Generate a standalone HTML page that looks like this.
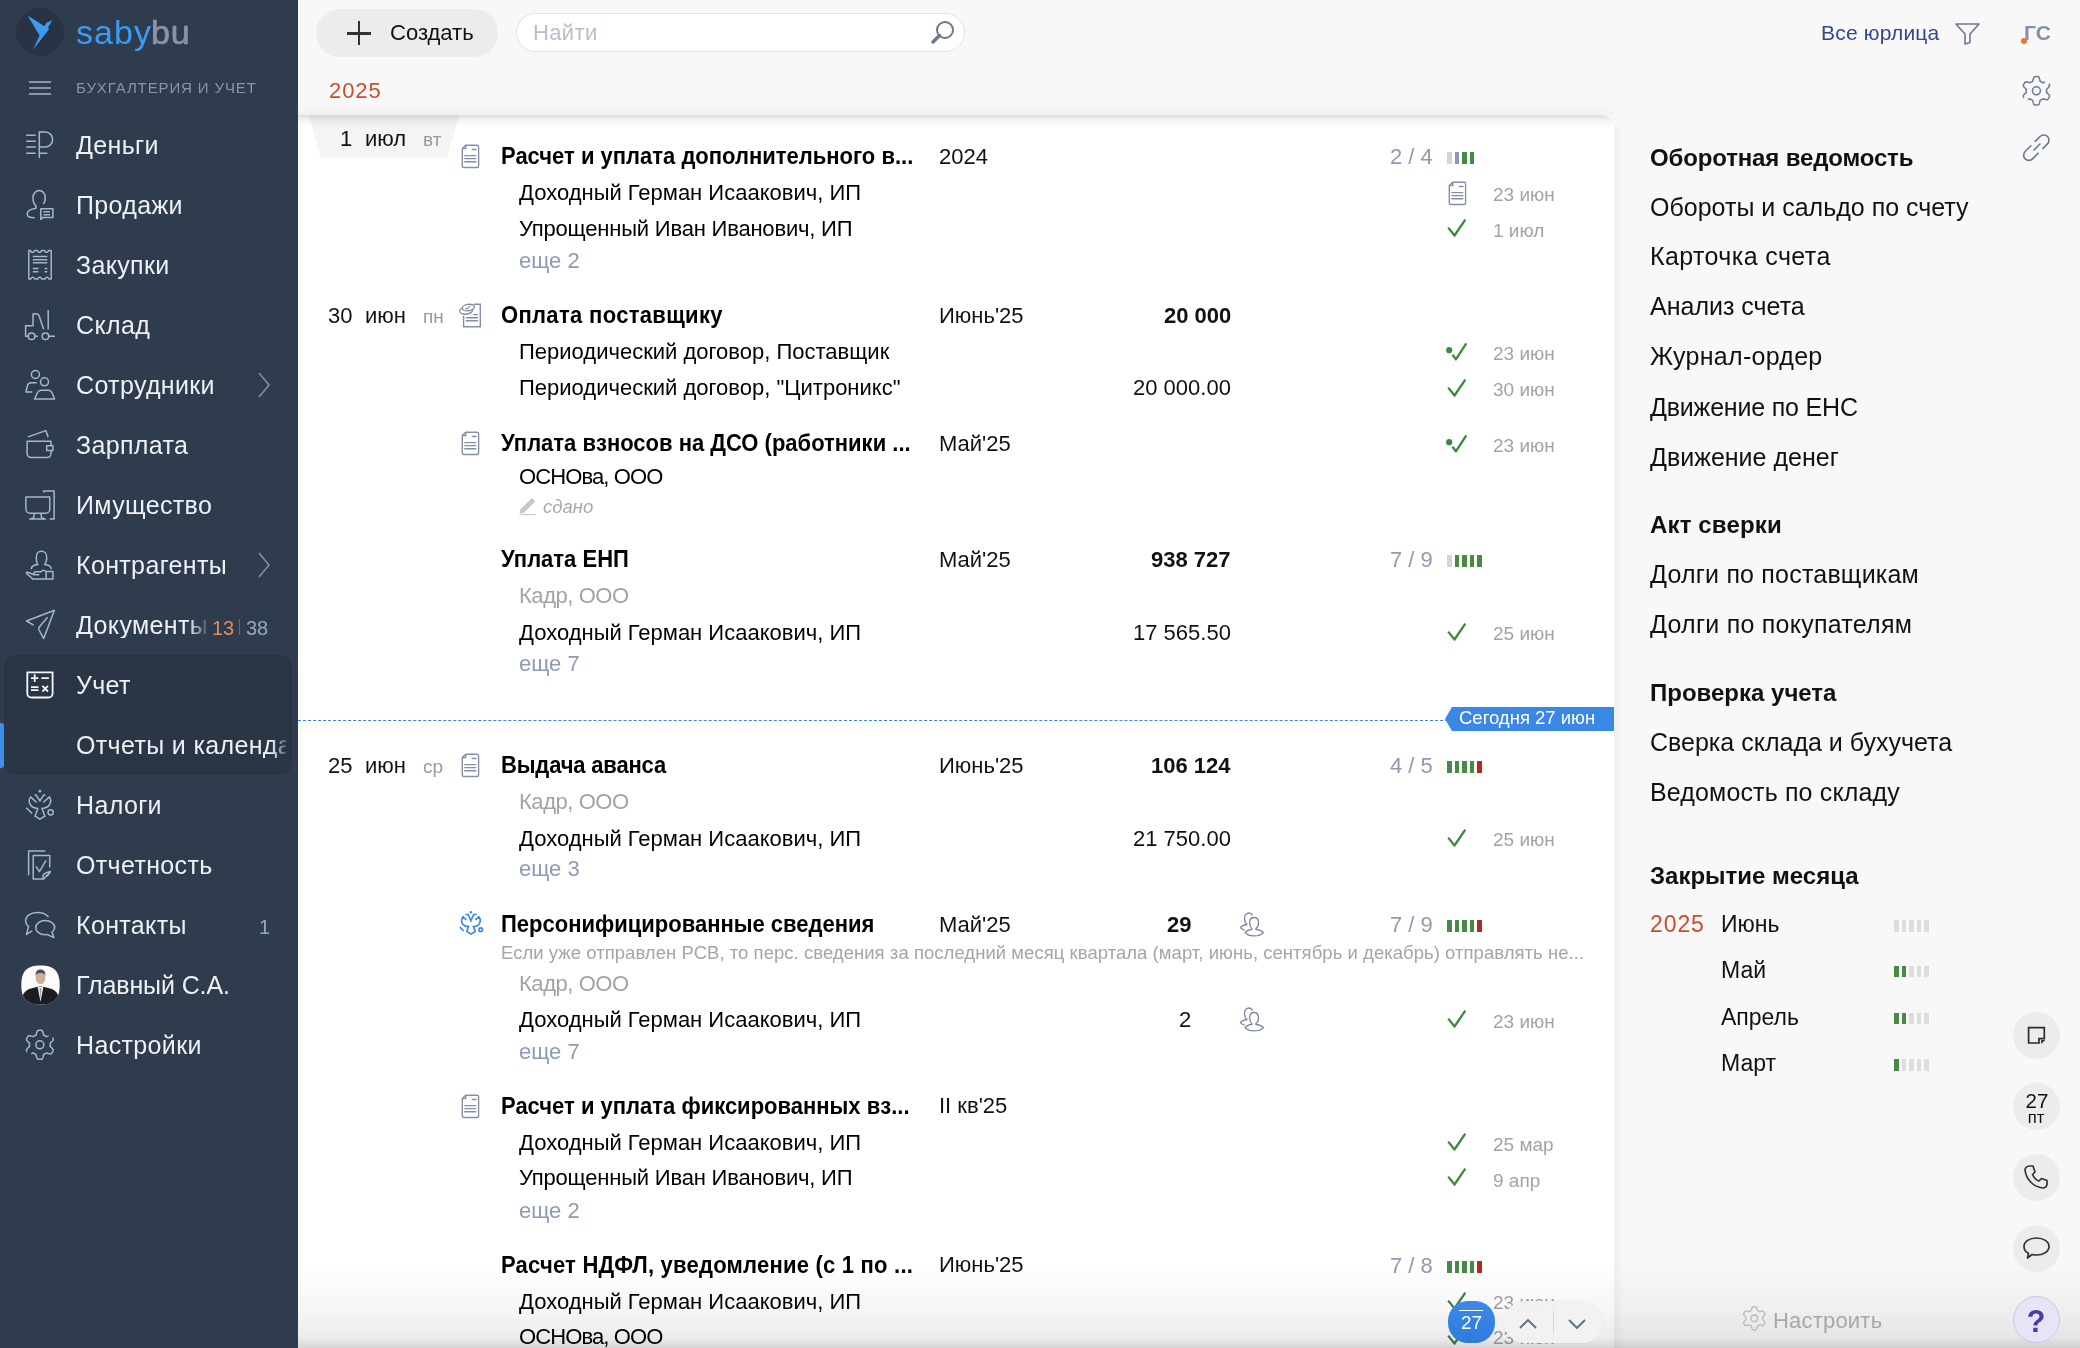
<!DOCTYPE html>
<html><head><meta charset="utf-8"><title>Отчеты и календарь</title>
<style>
html,body{margin:0;padding:0;}
body{width:2080px;height:1348px;overflow:hidden;background:#f8f8f8;position:relative;font-family:"Liberation Sans",sans-serif;}
.t{position:absolute;white-space:nowrap;will-change:transform;}
.r{position:absolute;}
.i{position:absolute;overflow:visible;}
</style></head><body>
<div class="r" style="left:0px;top:0px;width:298px;height:1348px;background:#2e3c4e;"></div>
<div class="r" style="left:298px;top:115px;width:1316px;height:1233px;background:#fff;border-top-right-radius:12px;"></div>
<svg class="i" style="left:309px;top:115px" width="150" height="43" viewBox="0 0 150 43"><path d="M0 0 H150 L138 42.5 H12 Z" fill="#f4f4f5"/></svg>
<div class="r" style="left:298px;top:115px;width:1316px;height:12px;background:linear-gradient(rgba(0,0,0,0.13),rgba(0,0,0,0.05) 40%,rgba(0,0,0,0));border-top-right-radius:12px;"></div>
<div class="r" style="left:298px;top:103px;width:1316px;height:12px;background:linear-gradient(rgba(0,0,0,0),rgba(0,0,0,0.025));"></div>
<div class="r" style="left:1614px;top:127px;width:10px;height:1221px;background:linear-gradient(90deg,rgba(0,0,0,0.035),rgba(0,0,0,0));"></div>
<div class="r" style="left:16px;top:8px;width:48px;height:48px;border-radius:50%;background:#283446;"></div>
<svg class="i" style="left:0;top:0" width="70" height="60" viewBox="0 0 70 60"><path d="M27.6 15.6 L44.5 26.3 L46.5 22.7 L52.5 20.2 L48.3 26.7 L48.9 29.4 L33.1 49.6 L39.6 35.6 Z" fill="#3d9bf4"/></svg>
<div class="t " style="left:75.60px;top:14.52px;font-size:34px;line-height:34px;color:#3a9cf6;letter-spacing:1.1px;">saby</div>
<div class="t " style="left:151.30px;top:14.62px;font-size:34px;line-height:34px;color:#8a93a8;letter-spacing:0.9px;-webkit-text-stroke:0.7px #8a93a8;">bu</div>
<div class="r" style="left:29px;top:81px;width:22px;height:1.6px;background:#8995a6;"></div>
<div class="r" style="left:29px;top:87px;width:22px;height:1.6px;background:#8995a6;"></div>
<div class="r" style="left:29px;top:93px;width:22px;height:1.6px;background:#8995a6;"></div>
<div class="t " style="left:75.60px;top:80.20px;font-size:15px;line-height:15px;color:#8995a6;letter-spacing:0.88px;">БУХГАЛТЕРИЯ И УЧЕТ</div>
<div class="r" style="left:4px;top:655px;width:288px;height:120px;border-radius:12px;background:#2a3646;"></div>
<div class="r" style="left:0px;top:723px;width:4px;height:45px;border-radius:0 3px 3px 0;background:#3f8ef0;"></div>
<div class="t " style="left:75.60px;top:133.34px;font-size:25px;line-height:25px;color:#eef0f3;letter-spacing:0.35px;">Деньги</div>
<div class="t " style="left:75.60px;top:193.34px;font-size:25px;line-height:25px;color:#eef0f3;letter-spacing:0.35px;">Продажи</div>
<div class="t " style="left:75.60px;top:253.34px;font-size:25px;line-height:25px;color:#eef0f3;letter-spacing:0.35px;">Закупки</div>
<div class="t " style="left:75.60px;top:313.34px;font-size:25px;line-height:25px;color:#eef0f3;letter-spacing:0.35px;">Склад</div>
<div class="t " style="left:75.60px;top:373.34px;font-size:25px;line-height:25px;color:#eef0f3;letter-spacing:0.35px;">Сотрудники</div>
<div class="t " style="left:75.60px;top:433.34px;font-size:25px;line-height:25px;color:#eef0f3;letter-spacing:0.35px;">Зарплата</div>
<div class="t " style="left:75.60px;top:493.34px;font-size:25px;line-height:25px;color:#eef0f3;letter-spacing:0.35px;">Имущество</div>
<div class="t " style="left:75.60px;top:553.34px;font-size:25px;line-height:25px;color:#eef0f3;letter-spacing:0.35px;">Контрагенты</div>
<div class="t" style="left:75.6px;top:613.34px;font-size:25px;line-height:25px;color:#eef0f3;letter-spacing:0.35px;width:131px;overflow:hidden;-webkit-mask-image:linear-gradient(90deg,#000 86%,rgba(0,0,0,0.15) 100%);">Документы</div>
<div class="t " style="left:75.60px;top:673.34px;font-size:25px;line-height:25px;color:#eef0f3;letter-spacing:0.35px;">Учет</div>
<div class="t" style="left:75.6px;top:733.34px;font-size:25px;line-height:25px;color:#eef0f3;letter-spacing:0.35px;width:210px;overflow:hidden;-webkit-mask-image:linear-gradient(90deg,#000 93%,rgba(0,0,0,0.25) 100%);">Отчеты и календарь</div>
<div class="t " style="left:75.60px;top:793.34px;font-size:25px;line-height:25px;color:#eef0f3;letter-spacing:0.35px;">Налоги</div>
<div class="t " style="left:75.60px;top:853.34px;font-size:25px;line-height:25px;color:#eef0f3;letter-spacing:0.35px;">Отчетность</div>
<div class="t " style="left:75.60px;top:913.34px;font-size:25px;line-height:25px;color:#eef0f3;letter-spacing:0.35px;">Контакты</div>
<div class="t " style="left:75.60px;top:973.34px;font-size:25px;line-height:25px;color:#eef0f3;letter-spacing:-0.12px;">Главный С.А.</div>
<div class="t " style="left:75.60px;top:1033.34px;font-size:25px;line-height:25px;color:#eef0f3;letter-spacing:0.35px;">Настройки</div>
<div class="t " style="left:211.50px;top:617.77px;font-size:20px;line-height:20px;color:#e8885a;">13</div>
<div class="r" style="left:239px;top:619px;width:1px;height:16px;background:#5a6a80;"></div>
<div class="t " style="left:245.50px;top:617.77px;font-size:20px;line-height:20px;color:#97a8c0;">38</div>
<div class="t " style="left:258.50px;top:916.87px;font-size:20px;line-height:20px;color:#97a8c0;">1</div>
<svg class="i" style="left:257px;top:372px;" width="14" height="26" viewBox="0 0 14 26"><path d="M2 1 L12 13 L2 25" fill="none" stroke="#7d8ea6" stroke-width="1.6"/></svg>
<svg class="i" style="left:257px;top:552px;" width="14" height="26" viewBox="0 0 14 26"><path d="M2 1 L12 13 L2 25" fill="none" stroke="#7d8ea6" stroke-width="1.6"/></svg>
<div class="r" style="left:316px;top:9px;width:182px;height:48px;border-radius:24px;background:#ececec;"></div>
<div class="r" style="left:347px;top:32px;width:24px;height:2.6px;background:#333;"></div>
<div class="r" style="left:357.7px;top:21px;width:2.6px;height:24px;background:#333;"></div>
<div class="t " style="left:390.00px;top:22.38px;font-size:22px;line-height:22px;color:#111;">Создать</div>
<div class="r" style="left:516px;top:13px;width:449px;height:39px;border-radius:20px;background:#fff;box-sizing:border-box;border:1px solid #e3e3e6;"></div>
<div class="t " style="left:532.80px;top:22.38px;font-size:22px;line-height:22px;color:#b6bdcc;letter-spacing:0.35px;">Найти</div>
<svg class="i" style="left:928px;top:19px;" width="28" height="26" viewBox="0 0 28 26"><circle cx="17" cy="11" r="8" fill="none" stroke="#6a7791" stroke-width="2"/><path d="M11.5 16.5 L5 23" stroke="#6a7791" stroke-width="3.5" stroke-linecap="round"/></svg>
<div class="t " style="left:329.00px;top:80.38px;font-size:22px;line-height:22px;color:#c84f2c;letter-spacing:0.9px;">2025</div>
<div class="t " style="left:1821.00px;top:22.12px;font-size:21px;line-height:21px;color:#33488a;letter-spacing:0.2px;">Все юрлица</div>
<svg class="i" style="left:1955px;top:23px;" width="25" height="22" viewBox="0 0 25 22"><path d="M1 1 H24 L15 11 V19.5 L10 21 V11 Z" fill="none" stroke="#6b7894" stroke-width="1.6" stroke-linejoin="round"/></svg>
<div class="t " style="left:2023.50px;top:22.12px;font-size:21px;line-height:21px;font-weight:700;color:#8391ad;">ГС</div>
<div class="r" style="left:2021px;top:38px;width:6px;height:6px;border-radius:50%;background:#e8743b;"></div>
<svg class="i" style="left:0;top:0" width="2080" height="200" viewBox="0 0 2080 200"><path d="M2046.60 90.80 L2046.59 91.16 L2046.58 91.51 L2046.54 91.87 L2046.50 92.22 L2046.74 92.62 L2047.31 93.12 L2047.89 93.67 L2048.47 94.26 L2049.00 94.89 L2049.46 95.55 L2049.57 96.12 L2049.37 96.58 L2049.16 97.02 L2048.94 97.47 L2048.70 97.90 L2048.44 98.32 L2048.17 98.74 L2047.89 99.15 L2047.59 99.54 L2047.05 99.73 L2046.25 99.67 L2045.43 99.52 L2044.63 99.32 L2043.86 99.09 L2043.15 98.84 L2042.68 98.84 L2042.40 99.05 L2042.10 99.26 L2041.81 99.45 L2041.50 99.63 L2041.19 99.81 L2040.87 99.97 L2040.55 100.12 L2040.22 100.26 L2039.99 100.67 L2039.85 101.40 L2039.66 102.19 L2039.44 102.98 L2039.15 103.76 L2038.81 104.49 L2038.38 104.86 L2037.88 104.92 L2037.39 104.97 L2036.90 104.99 L2036.40 105.00 L2035.90 104.99 L2035.41 104.97 L2034.92 104.92 L2034.42 104.86 L2033.99 104.49 L2033.65 103.76 L2033.36 102.98 L2033.14 102.19 L2032.95 101.40 L2032.81 100.67 L2032.58 100.26 L2032.25 100.12 L2031.93 99.97 L2031.61 99.81 L2031.30 99.63 L2030.99 99.45 L2030.70 99.26 L2030.40 99.05 L2030.12 98.84 L2029.65 98.84 L2028.94 99.09 L2028.17 99.32 L2027.37 99.52 L2026.55 99.67 L2025.75 99.73 L2025.21 99.54 L2024.91 99.15 L2024.63 98.74 L2024.36 98.32 L2024.10 97.90 L2023.86 97.47 L2023.64 97.02 L2023.43 96.58 L2023.23 96.12 L2023.34 95.55 L2023.80 94.89 L2024.33 94.26 L2024.91 93.67 L2025.49 93.12 L2026.06 92.62 L2026.30 92.22 L2026.26 91.87 L2026.22 91.51 L2026.21 91.16 L2026.20 90.80 L2026.21 90.44 L2026.22 90.09 L2026.26 89.73 L2026.30 89.38 L2026.06 88.98 L2025.49 88.48 L2024.91 87.93 L2024.33 87.34 L2023.80 86.71 L2023.34 86.05 L2023.23 85.48 L2023.43 85.02 L2023.64 84.58 L2023.86 84.13 L2024.10 83.70 L2024.36 83.28 L2024.63 82.86 L2024.91 82.45 L2025.21 82.06 L2025.75 81.87 L2026.55 81.93 L2027.37 82.08 L2028.17 82.28 L2028.94 82.51 L2029.65 82.76 L2030.12 82.76 L2030.40 82.55 L2030.70 82.34 L2030.99 82.15 L2031.30 81.97 L2031.61 81.79 L2031.93 81.63 L2032.25 81.48 L2032.58 81.34 L2032.81 80.93 L2032.95 80.20 L2033.14 79.41 L2033.36 78.62 L2033.65 77.84 L2033.99 77.11 L2034.42 76.74 L2034.92 76.68 L2035.41 76.63 L2035.90 76.61 L2036.40 76.60 L2036.90 76.61 L2037.39 76.63 L2037.88 76.68 L2038.38 76.74 L2038.81 77.11 L2039.15 77.84 L2039.44 78.62 L2039.66 79.41 L2039.85 80.20 L2039.99 80.93 L2040.22 81.34 L2040.55 81.48 L2040.87 81.63 L2041.19 81.79 L2041.50 81.97 L2041.81 82.15 L2042.10 82.34 L2042.40 82.55 L2042.68 82.76 L2043.15 82.76 L2043.86 82.51 L2044.63 82.28 L2045.43 82.08 L2046.25 81.93 L2047.05 81.87 L2047.59 82.06 L2047.89 82.45 L2048.17 82.86 L2048.44 83.28 L2048.70 83.70 L2048.94 84.13 L2049.16 84.58 L2049.37 85.02 L2049.57 85.48 L2049.46 86.05 L2049.00 86.71 L2048.47 87.34 L2047.89 87.93 L2047.31 88.48 L2046.74 88.98 L2046.50 89.38 L2046.54 89.73 L2046.58 90.09 L2046.59 90.44 L2046.60 90.80Z" fill="none" stroke="#6b7691" stroke-width="1.5"/><circle cx="2036.4" cy="90.8" r="4" fill="none" stroke="#6b7691" stroke-width="1.5"/><circle cx="2047.2" cy="82.2" r="2.3" fill="#f8f8f8"/><circle cx="2025.6" cy="99.4" r="2.3" fill="#f8f8f8"/><g transform="translate(2036.5,147.5) rotate(-45)" fill="none" stroke="#6b7691" stroke-width="1.6"><path d="M2.7 -5.2 H10.3 A5.2 5.2 0 0 1 10.3 5.2 H3"/><path d="M-2 -5.2 H-10.8 A5.2 5.2 0 0 0 -10.8 5.2 H-2.3"/><path d="M-4.3 0 H5.6"/></g></svg>
<div class="t " style="right:1728.00px;top:128.13px;font-size:22px;line-height:22px;color:#111;">1</div>
<div class="t " style="left:365.00px;top:128.13px;font-size:22px;line-height:22px;color:#111;">июл</div>
<div class="t " style="left:423.00px;top:129.67px;font-size:19px;line-height:19px;color:#9a9a9a;">вт</div>
<div class="t " style="right:1728.00px;top:305.38px;font-size:22px;line-height:22px;color:#111;">30</div>
<div class="t " style="left:365.00px;top:305.38px;font-size:22px;line-height:22px;color:#111;">июн</div>
<div class="t " style="left:423.00px;top:306.92px;font-size:19px;line-height:19px;color:#9a9a9a;">пн</div>
<div class="t " style="right:1728.00px;top:755.13px;font-size:22px;line-height:22px;color:#111;">25</div>
<div class="t " style="left:365.00px;top:755.13px;font-size:22px;line-height:22px;color:#111;">июн</div>
<div class="t " style="left:423.00px;top:756.67px;font-size:19px;line-height:19px;color:#9a9a9a;">ср</div>
<svg class="i" style="left:461px;top:144px;" width="19" height="25" viewBox="0 0 19 25"><g fill="none" stroke="#858ea8" stroke-width="1.4" stroke-linejoin="round"><path d="M4.7 1.2 H16.1 a1.5 1.5 0 0 1 1.5 1.5 V22 a1.5 1.5 0 0 1 -1.5 1.5 H2.8 a1.5 1.5 0 0 1 -1.5 -1.5 V4.6 Z"/><path d="M1.3 4.6 H4.7 V1.2"/><path d="M11.4 5.5 H15.1 M3.8 11.6 H14.8 M3.8 14.6 H14.8 M3.8 17.7 H14.8" stroke-linecap="round"/></g></svg>
<div class="t " style="left:501.00px;top:146.13px;font-size:22px;line-height:22px;font-weight:700;color:#000;transform:scaleY(1.05);transform-origin:0 18.5px;">Расчет и уплата дополнительного в...</div>
<div class="t " style="left:939.00px;top:146.13px;font-size:22px;line-height:22px;color:#111;">2024</div>
<div class="t " style="right:647.00px;top:146.13px;font-size:22px;line-height:22px;color:#8e9ab2;">2 / 4</div>
<div class="r" style="left:1447.0px;top:152px;width:4.7px;height:12px;background:#d4d4d4;"></div>
<div class="r" style="left:1454.5px;top:152px;width:4.7px;height:12px;background:#8f99b3;"></div>
<div class="r" style="left:1462.0px;top:152px;width:4.7px;height:12px;background:#468a46;"></div>
<div class="r" style="left:1469.5px;top:152px;width:4.7px;height:12px;background:#468a46;"></div>
<div class="t " style="left:519.00px;top:182.38px;font-size:22px;line-height:22px;color:#000;">Доходный Герман Исаакович, ИП</div>
<svg class="i" style="left:1447.5px;top:180.5px;" width="19" height="25" viewBox="0 0 19 25"><g fill="none" stroke="#858ea8" stroke-width="1.4" stroke-linejoin="round"><path d="M4.7 1.2 H16.1 a1.5 1.5 0 0 1 1.5 1.5 V22 a1.5 1.5 0 0 1 -1.5 1.5 H2.8 a1.5 1.5 0 0 1 -1.5 -1.5 V4.6 Z"/><path d="M1.3 4.6 H4.7 V1.2"/><path d="M11.4 5.5 H15.1 M3.8 11.6 H14.8 M3.8 14.6 H14.8 M3.8 17.7 H14.8" stroke-linecap="round"/></g></svg>
<div class="t " style="left:1492.90px;top:184.92px;font-size:19px;line-height:19px;color:#a3a3a3;">23 июн</div>
<div class="t " style="left:519.00px;top:217.88px;font-size:22px;line-height:22px;color:#000;letter-spacing:-0.2px;">Упрощенный Иван Иванович, ИП</div>
<svg class="i" style="left:1447px;top:219px;" width="20" height="18" viewBox="0 0 20 18"><path d="M1.2 8.6 L7.5 16.5 L18.3 0.6" fill="none" stroke="#3f893f" stroke-width="2.3" stroke-linejoin="round"/></svg>
<div class="t " style="left:1492.90px;top:220.67px;font-size:19px;line-height:19px;color:#a3a3a3;">1 июл</div>
<div class="t " style="left:519.00px;top:249.88px;font-size:22px;line-height:22px;color:#8e9bb6;">еще 2</div>
<svg class="i" style="left:450px;top:295px" width="50" height="40" viewBox="0 0 50 40"><g fill="none" stroke="#858ea8" stroke-width="1.4"><path d="M23.7 9.2 H30.3 V31.8 H13.6 V20.8"/><path d="M23.7 19.6 H27.6 M16.3 22.7 H27.6 M16.3 25.7 H27.6" stroke-linecap="round"/><ellipse cx="16.2" cy="15.6" rx="6.6" ry="3.5" transform="rotate(-8 16.2 15.6)" fill="#fff"/><ellipse cx="18.3" cy="12.6" rx="6" ry="3.2" transform="rotate(-8 18.3 12.6)" fill="#fff"/><path d="M15.4 13.4 L17.4 13.9 L20.2 10.6" stroke-width="1.1"/></g></svg>
<div class="t " style="left:501.00px;top:305.38px;font-size:22px;line-height:22px;font-weight:700;color:#000;letter-spacing:0.33px;transform:scaleY(1.05);transform-origin:0 18.5px;">Оплата поставщику</div>
<div class="t " style="left:939.00px;top:305.38px;font-size:22px;line-height:22px;color:#111;">Июнь&#x27;25</div>
<div class="t " style="right:849.20px;top:305.38px;font-size:22px;line-height:22px;font-weight:700;color:#111;">20 000</div>
<div class="t " style="left:519.00px;top:341.38px;font-size:22px;line-height:22px;color:#000;">Периодический договор, Поставщик</div>
<svg class="i" style="left:1446px;top:343px;" width="22" height="18" viewBox="0 0 22 18"><circle cx="3.2" cy="7.2" r="3.1" fill="#3f893f"/><path d="M6.5 11.8 L9.9 16.3 L20.3 0.4" fill="none" stroke="#3f893f" stroke-width="2.3" stroke-linejoin="round"/></svg>
<div class="t " style="left:1492.90px;top:343.92px;font-size:19px;line-height:19px;color:#a3a3a3;">23 июн</div>
<div class="t " style="left:519.00px;top:377.38px;font-size:22px;line-height:22px;color:#000;">Периодический договор, &quot;Цитроникс&quot;</div>
<div class="t " style="right:849.20px;top:377.38px;font-size:22px;line-height:22px;color:#111;">20 000.00</div>
<svg class="i" style="left:1447px;top:379px;" width="20" height="18" viewBox="0 0 20 18"><path d="M1.2 8.6 L7.5 16.5 L18.3 0.6" fill="none" stroke="#3f893f" stroke-width="2.3" stroke-linejoin="round"/></svg>
<div class="t " style="left:1492.90px;top:379.92px;font-size:19px;line-height:19px;color:#a3a3a3;">30 июн</div>
<svg class="i" style="left:461px;top:431px;" width="19" height="25" viewBox="0 0 19 25"><g fill="none" stroke="#858ea8" stroke-width="1.4" stroke-linejoin="round"><path d="M4.7 1.2 H16.1 a1.5 1.5 0 0 1 1.5 1.5 V22 a1.5 1.5 0 0 1 -1.5 1.5 H2.8 a1.5 1.5 0 0 1 -1.5 -1.5 V4.6 Z"/><path d="M1.3 4.6 H4.7 V1.2"/><path d="M11.4 5.5 H15.1 M3.8 11.6 H14.8 M3.8 14.6 H14.8 M3.8 17.7 H14.8" stroke-linecap="round"/></g></svg>
<div class="t " style="left:501.00px;top:433.13px;font-size:22px;line-height:22px;font-weight:700;color:#000;transform:scaleY(1.05);transform-origin:0 18.5px;">Уплата взносов на ДСО (работники ...</div>
<div class="t " style="left:939.00px;top:433.13px;font-size:22px;line-height:22px;color:#111;">Май&#x27;25</div>
<svg class="i" style="left:1446px;top:435px;" width="22" height="18" viewBox="0 0 22 18"><circle cx="3.2" cy="7.2" r="3.1" fill="#3f893f"/><path d="M6.5 11.8 L9.9 16.3 L20.3 0.4" fill="none" stroke="#3f893f" stroke-width="2.3" stroke-linejoin="round"/></svg>
<div class="t " style="left:1492.90px;top:435.67px;font-size:19px;line-height:19px;color:#a3a3a3;">23 июн</div>
<div class="t " style="left:519.00px;top:465.63px;font-size:22px;line-height:22px;color:#000;letter-spacing:-0.9px;">ОСНОва, ООО</div>
<svg class="i" style="left:510px;top:490px" width="40" height="30" viewBox="510 490 40 30"><path d="M520.3 509.5 L531.8 498 L535.2 501.4 L523.7 512.9 L519.8 513.3 Z" fill="#c6c6c6"/><path d="M519.3 514.6 H536" stroke="#c6c6c6" stroke-width="1"/></svg>
<div class="t " style="left:542.50px;top:498.09px;font-size:18.5px;line-height:18.5px;color:#a8a8a8;font-style:italic;">сдано</div>
<div class="t " style="left:501.00px;top:548.88px;font-size:22px;line-height:22px;font-weight:700;color:#000;transform:scaleY(1.05);transform-origin:0 18.5px;">Уплата ЕНП</div>
<div class="t " style="left:939.00px;top:548.88px;font-size:22px;line-height:22px;color:#111;">Май&#x27;25</div>
<div class="t " style="right:849.20px;top:548.88px;font-size:22px;line-height:22px;font-weight:700;color:#111;">938 727</div>
<div class="t " style="right:647.00px;top:548.88px;font-size:22px;line-height:22px;color:#8e9ab2;">7 / 9</div>
<div class="r" style="left:1447.0px;top:555px;width:4.7px;height:12px;background:#d4d4d4;"></div>
<div class="r" style="left:1454.5px;top:555px;width:4.7px;height:12px;background:#468a46;"></div>
<div class="r" style="left:1462.0px;top:555px;width:4.7px;height:12px;background:#468a46;"></div>
<div class="r" style="left:1469.5px;top:555px;width:4.7px;height:12px;background:#468a46;"></div>
<div class="r" style="left:1477.0px;top:555px;width:4.7px;height:12px;background:#468a46;"></div>
<div class="t " style="left:519.00px;top:584.88px;font-size:22px;line-height:22px;color:#a3a3a3;letter-spacing:-0.45px;">Кадр, ООО</div>
<div class="t " style="left:519.00px;top:621.88px;font-size:22px;line-height:22px;color:#000;">Доходный Герман Исаакович, ИП</div>
<div class="t " style="right:849.20px;top:621.88px;font-size:22px;line-height:22px;color:#111;">17 565.50</div>
<svg class="i" style="left:1447px;top:623px;" width="20" height="18" viewBox="0 0 20 18"><path d="M1.2 8.6 L7.5 16.5 L18.3 0.6" fill="none" stroke="#3f893f" stroke-width="2.3" stroke-linejoin="round"/></svg>
<div class="t " style="left:1492.90px;top:624.42px;font-size:19px;line-height:19px;color:#a3a3a3;">25 июн</div>
<div class="t " style="left:519.00px;top:652.63px;font-size:22px;line-height:22px;color:#8e9bb6;">еще 7</div>
<div class="r" style="left:298px;top:719.5px;width:1150px;height:0;border-top:1.2px dashed #3a88ea;"></div>
<svg class="i" style="left:1445px;top:707px" width="169" height="24" viewBox="0 0 169 24"><path d="M0 12 L7 0 H169 V24 H7 Z" fill="#3a87e6"/></svg>
<div class="t " style="left:1458.75px;top:709.34px;font-size:18.5px;line-height:18.5px;color:#fff;">Сегодня 27 июн</div>
<svg class="i" style="left:461px;top:753px;" width="19" height="25" viewBox="0 0 19 25"><g fill="none" stroke="#858ea8" stroke-width="1.4" stroke-linejoin="round"><path d="M4.7 1.2 H16.1 a1.5 1.5 0 0 1 1.5 1.5 V22 a1.5 1.5 0 0 1 -1.5 1.5 H2.8 a1.5 1.5 0 0 1 -1.5 -1.5 V4.6 Z"/><path d="M1.3 4.6 H4.7 V1.2"/><path d="M11.4 5.5 H15.1 M3.8 11.6 H14.8 M3.8 14.6 H14.8 M3.8 17.7 H14.8" stroke-linecap="round"/></g></svg>
<div class="t " style="left:501.00px;top:755.13px;font-size:22px;line-height:22px;font-weight:700;color:#000;letter-spacing:-0.17px;transform:scaleY(1.05);transform-origin:0 18.5px;">Выдача аванса</div>
<div class="t " style="left:939.00px;top:755.13px;font-size:22px;line-height:22px;color:#111;">Июнь&#x27;25</div>
<div class="t " style="right:849.20px;top:755.13px;font-size:22px;line-height:22px;font-weight:700;color:#111;">106 124</div>
<div class="t " style="right:647.00px;top:755.13px;font-size:22px;line-height:22px;color:#8e9ab2;">4 / 5</div>
<div class="r" style="left:1447.0px;top:761px;width:4.7px;height:12px;background:#468a46;"></div>
<div class="r" style="left:1454.5px;top:761px;width:4.7px;height:12px;background:#468a46;"></div>
<div class="r" style="left:1462.0px;top:761px;width:4.7px;height:12px;background:#468a46;"></div>
<div class="r" style="left:1469.5px;top:761px;width:4.7px;height:12px;background:#468a46;"></div>
<div class="r" style="left:1477.0px;top:761px;width:4.7px;height:12px;background:#b42a20;"></div>
<div class="t " style="left:519.00px;top:791.38px;font-size:22px;line-height:22px;color:#a3a3a3;letter-spacing:-0.45px;">Кадр, ООО</div>
<div class="t " style="left:519.00px;top:827.63px;font-size:22px;line-height:22px;color:#000;">Доходный Герман Исаакович, ИП</div>
<div class="t " style="right:849.20px;top:827.63px;font-size:22px;line-height:22px;color:#111;">21 750.00</div>
<svg class="i" style="left:1447px;top:829px;" width="20" height="18" viewBox="0 0 20 18"><path d="M1.2 8.6 L7.5 16.5 L18.3 0.6" fill="none" stroke="#3f893f" stroke-width="2.3" stroke-linejoin="round"/></svg>
<div class="t " style="left:1492.90px;top:830.17px;font-size:19px;line-height:19px;color:#a3a3a3;">25 июн</div>
<div class="t " style="left:519.00px;top:857.63px;font-size:22px;line-height:22px;color:#8e9bb6;">еще 3</div>
<svg class="i" style="left:0;top:0" width="520" height="960" viewBox="0 0 520 960"><path d="M465.41 914.50 L468.19 914.50 L470.90 920.70 L473.69 914.50 L476.72 914.50 M466.39 920.04 L463.03 916.68 C460.24 920.04 461.47 926.52 468.52 926.52 L466.72 931.44 L470.90 933.98 L475.41 931.44 L473.36 926.52 C480.33 926.52 481.56 920.04 478.94 916.68 L475.41 920.04 M459.67 927.01 L463.68 930.86" fill="none" stroke="#3a87e6" stroke-width="1.6" stroke-linejoin="miter"/><circle cx="480.74" cy="929.72" r="1.80" fill="none" stroke="#3a87e6" stroke-width="1.6"/><rect x="469.75" y="911.18" width="2.30" height="2.13" fill="#3a87e6"/></svg>
<div class="t " style="left:501.00px;top:913.88px;font-size:22px;line-height:22px;font-weight:700;color:#000;transform:scaleY(1.05);transform-origin:0 18.5px;">Персонифицированные сведения</div>
<div class="t " style="left:939.00px;top:913.88px;font-size:22px;line-height:22px;color:#111;">Май&#x27;25</div>
<div class="t " style="right:889.00px;top:913.88px;font-size:22px;line-height:22px;font-weight:700;color:#111;">29</div>
<svg class="i" style="left:1230px;top:905px;" width="40" height="40" viewBox="0 0 40 40"><g fill="none" stroke="#7d87a5" stroke-width="1.3" stroke-linejoin="round"><path d="M22.6 10.4 C21.8 8.8 20.5 8 19 8 C16.5 8 14.5 10.3 14.5 13.4 C14.5 16 15.3 18 16.9 19 V19.5 C13.5 20 11.5 21 10.4 22.6 C11.5 24 13 24.8 14.8 25.2"/><path d="M22 23.7 C20.5 22.5 19.6 20.5 19.6 17.8 C19.6 14.5 21.5 12.5 24 12.5 C26.5 12.5 28.5 14.5 28.5 17.8 C28.5 20.5 27.5 22.5 25.8 23.7 V24.3 C29 24.5 31.8 25.8 33.5 27.6 C31.5 29.8 28 30.9 24 30.9 C20 30.9 16.8 29.8 15.1 27.6 C16.5 25.8 19 24.5 22 24.3 Z"/></g></svg>
<div class="t " style="right:647.00px;top:913.88px;font-size:22px;line-height:22px;color:#8e9ab2;">7 / 9</div>
<div class="r" style="left:1447.0px;top:920px;width:4.7px;height:12px;background:#468a46;"></div>
<div class="r" style="left:1454.5px;top:920px;width:4.7px;height:12px;background:#468a46;"></div>
<div class="r" style="left:1462.0px;top:920px;width:4.7px;height:12px;background:#468a46;"></div>
<div class="r" style="left:1469.5px;top:920px;width:4.7px;height:12px;background:#468a46;"></div>
<div class="r" style="left:1477.0px;top:920px;width:4.7px;height:12px;background:#b42a20;"></div>
<div class="t " style="left:501.00px;top:943.59px;font-size:18.5px;line-height:18.5px;color:#a5a5a5;letter-spacing:0.04px;">Если уже отправлен РСВ, то перс. сведения за последний месяц квартала (март, июнь, сентябрь и декабрь) отправлять не...</div>
<div class="t " style="left:519.00px;top:972.63px;font-size:22px;line-height:22px;color:#a3a3a3;letter-spacing:-0.45px;">Кадр, ООО</div>
<div class="t " style="left:519.00px;top:1008.63px;font-size:22px;line-height:22px;color:#000;">Доходный Герман Исаакович, ИП</div>
<div class="t " style="right:889.00px;top:1008.63px;font-size:22px;line-height:22px;color:#111;">2</div>
<svg class="i" style="left:1230px;top:999.75px;" width="40" height="40" viewBox="0 0 40 40"><g fill="none" stroke="#7d87a5" stroke-width="1.3" stroke-linejoin="round"><path d="M22.6 10.4 C21.8 8.8 20.5 8 19 8 C16.5 8 14.5 10.3 14.5 13.4 C14.5 16 15.3 18 16.9 19 V19.5 C13.5 20 11.5 21 10.4 22.6 C11.5 24 13 24.8 14.8 25.2"/><path d="M22 23.7 C20.5 22.5 19.6 20.5 19.6 17.8 C19.6 14.5 21.5 12.5 24 12.5 C26.5 12.5 28.5 14.5 28.5 17.8 C28.5 20.5 27.5 22.5 25.8 23.7 V24.3 C29 24.5 31.8 25.8 33.5 27.6 C31.5 29.8 28 30.9 24 30.9 C20 30.9 16.8 29.8 15.1 27.6 C16.5 25.8 19 24.5 22 24.3 Z"/></g></svg>
<svg class="i" style="left:1447px;top:1010px;" width="20" height="18" viewBox="0 0 20 18"><path d="M1.2 8.6 L7.5 16.5 L18.3 0.6" fill="none" stroke="#3f893f" stroke-width="2.3" stroke-linejoin="round"/></svg>
<div class="t " style="left:1492.90px;top:1012.17px;font-size:19px;line-height:19px;color:#a3a3a3;">23 июн</div>
<div class="t " style="left:519.00px;top:1040.88px;font-size:22px;line-height:22px;color:#8e9bb6;">еще 7</div>
<svg class="i" style="left:461px;top:1094px;" width="19" height="25" viewBox="0 0 19 25"><g fill="none" stroke="#858ea8" stroke-width="1.4" stroke-linejoin="round"><path d="M4.7 1.2 H16.1 a1.5 1.5 0 0 1 1.5 1.5 V22 a1.5 1.5 0 0 1 -1.5 1.5 H2.8 a1.5 1.5 0 0 1 -1.5 -1.5 V4.6 Z"/><path d="M1.3 4.6 H4.7 V1.2"/><path d="M11.4 5.5 H15.1 M3.8 11.6 H14.8 M3.8 14.6 H14.8 M3.8 17.7 H14.8" stroke-linecap="round"/></g></svg>
<div class="t " style="left:501.00px;top:1095.88px;font-size:22px;line-height:22px;font-weight:700;color:#000;transform:scaleY(1.05);transform-origin:0 18.5px;">Расчет и уплата фиксированных вз...</div>
<div class="t " style="left:939.00px;top:1094.88px;font-size:22px;line-height:22px;color:#111;">II кв&#x27;25</div>
<div class="t " style="left:519.00px;top:1132.13px;font-size:22px;line-height:22px;color:#000;">Доходный Герман Исаакович, ИП</div>
<svg class="i" style="left:1447px;top:1133px;" width="20" height="18" viewBox="0 0 20 18"><path d="M1.2 8.6 L7.5 16.5 L18.3 0.6" fill="none" stroke="#3f893f" stroke-width="2.3" stroke-linejoin="round"/></svg>
<div class="t " style="left:1492.90px;top:1134.67px;font-size:19px;line-height:19px;color:#a3a3a3;">25 мар</div>
<div class="t " style="left:519.00px;top:1167.13px;font-size:22px;line-height:22px;color:#000;letter-spacing:-0.2px;">Упрощенный Иван Иванович, ИП</div>
<svg class="i" style="left:1447px;top:1168px;" width="20" height="18" viewBox="0 0 20 18"><path d="M1.2 8.6 L7.5 16.5 L18.3 0.6" fill="none" stroke="#3f893f" stroke-width="2.3" stroke-linejoin="round"/></svg>
<div class="t " style="left:1492.90px;top:1170.92px;font-size:19px;line-height:19px;color:#a3a3a3;">9 апр</div>
<div class="t " style="left:519.00px;top:1199.63px;font-size:22px;line-height:22px;color:#8e9bb6;">еще 2</div>
<div class="t " style="left:501.00px;top:1254.63px;font-size:22px;line-height:22px;font-weight:700;color:#000;letter-spacing:0.22px;transform:scaleY(1.05);transform-origin:0 18.5px;">Расчет НДФЛ, уведомление (с 1 по ...</div>
<div class="t " style="left:939.00px;top:1254.13px;font-size:22px;line-height:22px;color:#111;">Июнь&#x27;25</div>
<div class="t " style="right:647.00px;top:1254.63px;font-size:22px;line-height:22px;color:#8e9ab2;">7 / 8</div>
<div class="r" style="left:1447.0px;top:1261px;width:4.7px;height:12px;background:#468a46;"></div>
<div class="r" style="left:1454.5px;top:1261px;width:4.7px;height:12px;background:#468a46;"></div>
<div class="r" style="left:1462.0px;top:1261px;width:4.7px;height:12px;background:#468a46;"></div>
<div class="r" style="left:1469.5px;top:1261px;width:4.7px;height:12px;background:#468a46;"></div>
<div class="r" style="left:1477.0px;top:1261px;width:4.7px;height:12px;background:#b42a20;"></div>
<div class="t " style="left:519.00px;top:1290.88px;font-size:22px;line-height:22px;color:#000;">Доходный Герман Исаакович, ИП</div>
<svg class="i" style="left:1447px;top:1292px;" width="20" height="18" viewBox="0 0 20 18"><path d="M1.2 8.6 L7.5 16.5 L18.3 0.6" fill="none" stroke="#3f893f" stroke-width="2.3" stroke-linejoin="round"/></svg>
<div class="t " style="left:1492.90px;top:1293.42px;font-size:19px;line-height:19px;color:#a3a3a3;">23 июн</div>
<div class="t " style="left:519.00px;top:1325.88px;font-size:22px;line-height:22px;color:#000;letter-spacing:-0.9px;">ОСНОва, ООО</div>
<svg class="i" style="left:1447px;top:1327px;" width="20" height="18" viewBox="0 0 20 18"><path d="M1.2 8.6 L7.5 16.5 L18.3 0.6" fill="none" stroke="#3f893f" stroke-width="2.3" stroke-linejoin="round"/></svg>
<div class="t " style="left:1492.90px;top:1328.42px;font-size:19px;line-height:19px;color:#a3a3a3;">23 июн</div>
<div class="t " style="left:1649.70px;top:145.68px;font-size:24px;line-height:24px;font-weight:700;color:#111;letter-spacing:-0.15px;">Оборотная ведомость</div>
<div class="t " style="left:1649.70px;top:194.84px;font-size:25px;line-height:25px;color:#111;">Обороты и сальдо по счету</div>
<div class="t " style="left:1649.70px;top:244.09px;font-size:25px;line-height:25px;color:#111;letter-spacing:0.4px;">Карточка счета</div>
<div class="t " style="left:1649.70px;top:294.09px;font-size:25px;line-height:25px;color:#111;">Анализ счета</div>
<div class="t " style="left:1649.70px;top:344.34px;font-size:25px;line-height:25px;color:#111;letter-spacing:0.28px;">Журнал-ордер</div>
<div class="t " style="left:1649.70px;top:394.84px;font-size:25px;line-height:25px;color:#111;letter-spacing:-0.19px;">Движение по ЕНС</div>
<div class="t " style="left:1649.70px;top:444.84px;font-size:25px;line-height:25px;color:#111;">Движение денег</div>
<div class="t " style="left:1649.70px;top:512.68px;font-size:24px;line-height:24px;font-weight:700;color:#111;letter-spacing:0.15px;">Акт сверки</div>
<div class="t " style="left:1649.70px;top:561.84px;font-size:25px;line-height:25px;color:#111;letter-spacing:0.2px;">Долги по поставщикам</div>
<div class="t " style="left:1649.70px;top:611.84px;font-size:25px;line-height:25px;color:#111;letter-spacing:0.25px;">Долги по покупателям</div>
<div class="t " style="left:1649.70px;top:680.93px;font-size:24px;line-height:24px;font-weight:700;color:#111;">Проверка учета</div>
<div class="t " style="left:1649.70px;top:730.09px;font-size:25px;line-height:25px;color:#111;">Сверка склада и бухучета</div>
<div class="t " style="left:1649.70px;top:780.09px;font-size:25px;line-height:25px;color:#111;letter-spacing:0.14px;">Ведомость по складу</div>
<div class="t " style="left:1649.70px;top:864.18px;font-size:24px;line-height:24px;font-weight:700;color:#111;">Закрытие месяца</div>
<div class="t " style="left:1649.70px;top:913.03px;font-size:23px;line-height:23px;color:#c84f2c;letter-spacing:0.9px;">2025</div>
<div class="t " style="left:1720.50px;top:913.03px;font-size:23px;line-height:23px;color:#111;">Июнь</div>
<div class="r" style="left:1894.0px;top:920.0px;width:4.7px;height:11.5px;background:#dcdcdc;"></div>
<div class="r" style="left:1901.5px;top:920.0px;width:4.7px;height:11.5px;background:#dcdcdc;"></div>
<div class="r" style="left:1909.0px;top:920.0px;width:4.7px;height:11.5px;background:#dcdcdc;"></div>
<div class="r" style="left:1916.5px;top:920.0px;width:4.7px;height:11.5px;background:#dcdcdc;"></div>
<div class="r" style="left:1924.0px;top:920.0px;width:4.7px;height:11.5px;background:#dcdcdc;"></div>
<div class="t " style="left:1720.50px;top:958.78px;font-size:23px;line-height:23px;color:#111;">Май</div>
<div class="r" style="left:1894.0px;top:965.75px;width:4.7px;height:11.5px;background:#468a46;"></div>
<div class="r" style="left:1901.5px;top:965.75px;width:4.7px;height:11.5px;background:#468a46;"></div>
<div class="r" style="left:1909.0px;top:965.75px;width:4.7px;height:11.5px;background:#dcdcdc;"></div>
<div class="r" style="left:1916.5px;top:965.75px;width:4.7px;height:11.5px;background:#dcdcdc;"></div>
<div class="r" style="left:1924.0px;top:965.75px;width:4.7px;height:11.5px;background:#dcdcdc;"></div>
<div class="t " style="left:1720.50px;top:1005.53px;font-size:23px;line-height:23px;color:#111;">Апрель</div>
<div class="r" style="left:1894.0px;top:1012.5px;width:4.7px;height:11.5px;background:#468a46;"></div>
<div class="r" style="left:1901.5px;top:1012.5px;width:4.7px;height:11.5px;background:#468a46;"></div>
<div class="r" style="left:1909.0px;top:1012.5px;width:4.7px;height:11.5px;background:#dcdcdc;"></div>
<div class="r" style="left:1916.5px;top:1012.5px;width:4.7px;height:11.5px;background:#dcdcdc;"></div>
<div class="r" style="left:1924.0px;top:1012.5px;width:4.7px;height:11.5px;background:#dcdcdc;"></div>
<div class="t " style="left:1720.50px;top:1052.03px;font-size:23px;line-height:23px;color:#111;">Март</div>
<div class="r" style="left:1894.0px;top:1059.0px;width:4.7px;height:11.5px;background:#468a46;"></div>
<div class="r" style="left:1901.5px;top:1059.0px;width:4.7px;height:11.5px;background:#dcdcdc;"></div>
<div class="r" style="left:1909.0px;top:1059.0px;width:4.7px;height:11.5px;background:#dcdcdc;"></div>
<div class="r" style="left:1916.5px;top:1059.0px;width:4.7px;height:11.5px;background:#dcdcdc;"></div>
<div class="r" style="left:1924.0px;top:1059.0px;width:4.7px;height:11.5px;background:#dcdcdc;"></div>
<div class="r" style="left:298px;top:1262px;width:1782px;height:86px;background:linear-gradient(rgba(0,0,0,0),rgba(0,0,0,0.035) 55%,rgba(0,0,0,0.075) 88%,rgba(0,0,0,0.14) 97%,rgba(0,0,0,0.16));"></div>
<div class="r" style="left:1447.5px;top:1301px;width:47px;height:42px;border-radius:21px;background:linear-gradient(#3a89ea,#2f7bdc);border-radius:20px;"></div>
<div class="r" style="left:1459px;top:1309.5px;width:24px;height:1.2px;background:#fff;"></div>
<div class="t " style="left:1461.00px;top:1312.92px;font-size:19px;line-height:19px;color:#fff;">27</div>
<div class="r" style="left:1504px;top:1301px;width:99px;height:42px;border-radius:21px;background:rgba(241,241,241,0.96);box-shadow:0 0 0 1px rgba(0,0,0,0.03);"></div>
<div class="r" style="left:1553px;top:1311px;width:1px;height:22px;background:#d8d8d8;"></div>
<svg class="i" style="left:1518px;top:1317.5px;" width="20" height="12" viewBox="0 0 20 12"><path d="M2 10 L10 2 L18 10" fill="none" stroke="#5d6b87" stroke-width="1.8"/></svg>
<svg class="i" style="left:1567px;top:1317.5px;" width="20" height="12" viewBox="0 0 20 12"><path d="M2 2 L10 10 L18 2" fill="none" stroke="#5d6b87" stroke-width="1.8"/></svg>
<svg class="i" style="left:1700px;top:1280px" width="100" height="68" viewBox="1700 1280 100 68"><path d="M1762.60 1318.30 L1762.59 1318.59 L1762.58 1318.88 L1762.55 1319.17 L1762.52 1319.46 L1762.71 1319.78 L1763.16 1320.18 L1763.63 1320.63 L1764.09 1321.11 L1764.51 1321.62 L1764.88 1322.15 L1764.96 1322.61 L1764.81 1322.98 L1764.64 1323.34 L1764.45 1323.70 L1764.26 1324.05 L1764.05 1324.39 L1763.83 1324.73 L1763.60 1325.06 L1763.36 1325.38 L1762.93 1325.54 L1762.28 1325.49 L1761.63 1325.37 L1760.98 1325.22 L1760.36 1325.03 L1759.79 1324.84 L1759.41 1324.84 L1759.18 1325.01 L1758.94 1325.18 L1758.70 1325.34 L1758.45 1325.49 L1758.20 1325.63 L1757.94 1325.76 L1757.68 1325.88 L1757.41 1326.00 L1757.22 1326.32 L1757.10 1326.92 L1756.95 1327.54 L1756.76 1328.18 L1756.53 1328.81 L1756.26 1329.39 L1755.90 1329.69 L1755.50 1329.74 L1755.10 1329.77 L1754.70 1329.79 L1754.30 1329.80 L1753.90 1329.79 L1753.50 1329.77 L1753.10 1329.74 L1752.70 1329.69 L1752.34 1329.39 L1752.07 1328.81 L1751.84 1328.18 L1751.65 1327.54 L1751.50 1326.92 L1751.38 1326.32 L1751.19 1326.00 L1750.92 1325.88 L1750.66 1325.76 L1750.40 1325.63 L1750.15 1325.49 L1749.90 1325.34 L1749.66 1325.18 L1749.42 1325.01 L1749.19 1324.84 L1748.81 1324.84 L1748.24 1325.03 L1747.62 1325.22 L1746.97 1325.37 L1746.32 1325.49 L1745.67 1325.54 L1745.24 1325.38 L1745.00 1325.06 L1744.77 1324.73 L1744.55 1324.39 L1744.34 1324.05 L1744.15 1323.70 L1743.96 1323.34 L1743.79 1322.98 L1743.64 1322.61 L1743.72 1322.15 L1744.09 1321.62 L1744.51 1321.11 L1744.97 1320.63 L1745.44 1320.18 L1745.89 1319.78 L1746.08 1319.46 L1746.05 1319.17 L1746.02 1318.88 L1746.01 1318.59 L1746.00 1318.30 L1746.01 1318.01 L1746.02 1317.72 L1746.05 1317.43 L1746.08 1317.14 L1745.89 1316.82 L1745.44 1316.42 L1744.97 1315.97 L1744.51 1315.49 L1744.09 1314.98 L1743.72 1314.45 L1743.64 1313.99 L1743.79 1313.62 L1743.96 1313.26 L1744.15 1312.90 L1744.34 1312.55 L1744.55 1312.21 L1744.77 1311.87 L1745.00 1311.54 L1745.24 1311.22 L1745.67 1311.06 L1746.32 1311.11 L1746.97 1311.23 L1747.62 1311.38 L1748.24 1311.57 L1748.81 1311.76 L1749.19 1311.76 L1749.42 1311.59 L1749.66 1311.42 L1749.90 1311.26 L1750.15 1311.11 L1750.40 1310.97 L1750.66 1310.84 L1750.92 1310.72 L1751.19 1310.60 L1751.38 1310.28 L1751.50 1309.68 L1751.65 1309.06 L1751.84 1308.42 L1752.07 1307.79 L1752.34 1307.21 L1752.70 1306.91 L1753.10 1306.86 L1753.50 1306.83 L1753.90 1306.81 L1754.30 1306.80 L1754.70 1306.81 L1755.10 1306.83 L1755.50 1306.86 L1755.90 1306.91 L1756.26 1307.21 L1756.53 1307.79 L1756.76 1308.42 L1756.95 1309.06 L1757.10 1309.68 L1757.22 1310.28 L1757.41 1310.60 L1757.68 1310.72 L1757.94 1310.84 L1758.20 1310.97 L1758.45 1311.11 L1758.70 1311.26 L1758.94 1311.42 L1759.18 1311.59 L1759.41 1311.76 L1759.79 1311.76 L1760.36 1311.57 L1760.98 1311.38 L1761.63 1311.23 L1762.28 1311.11 L1762.93 1311.06 L1763.36 1311.22 L1763.60 1311.54 L1763.83 1311.87 L1764.05 1312.21 L1764.26 1312.55 L1764.45 1312.90 L1764.64 1313.26 L1764.81 1313.62 L1764.96 1313.99 L1764.88 1314.45 L1764.51 1314.98 L1764.09 1315.49 L1763.63 1315.97 L1763.16 1316.42 L1762.71 1316.82 L1762.52 1317.14 L1762.55 1317.43 L1762.58 1317.72 L1762.59 1318.01 L1762.60 1318.30Z" fill="none" stroke="#b8b8b8" stroke-width="1.3"/><circle cx="1754.3" cy="1318.3" r="3.3" fill="none" stroke="#b8b8b8" stroke-width="1.3"/></svg>
<div class="t " style="left:1773.25px;top:1309.63px;font-size:22px;line-height:22px;color:#a8a8a8;letter-spacing:0.2px;">Настроить</div>
<div class="r" style="left:2012.9px;top:1011.9px;width:47px;height:47px;border-radius:50%;background:#ececec;"></div>
<div class="r" style="left:2012.9px;top:1082.9px;width:47px;height:47px;border-radius:50%;background:#ececec;"></div>
<div class="r" style="left:2012.9px;top:1153.9px;width:47px;height:47px;border-radius:50%;background:#ececec;"></div>
<div class="r" style="left:2012.9px;top:1224.9px;width:47px;height:47px;border-radius:50%;background:#ececec;"></div>
<div class="r" style="left:2012.9px;top:1295.9px;width:47px;height:47px;border-radius:50%;background:#e8e4f6;box-sizing:border-box;border:1px solid #cbc3ef;"></div>
<svg class="i" style="left:2000px;top:1000px" width="80" height="80" viewBox="2000 1000 80 80"><path d="M2028.6 1027.7 H2044.3 V1038.6 H2039 V1043 H2028.6 Z" fill="none" stroke="#2b2b2b" stroke-width="1.7" stroke-linejoin="miter"/><path d="M2041.2 1039.9 H2045.2 L2041.2 1043.9 Z" fill="#2b2b2b"/></svg>
<div class="t " style="left:2036.70px;top:1090.85px;font-size:20.5px;line-height:20.5px;color:#111;transform:translateX(-50%);">27</div>
<div class="t " style="left:2036.40px;top:1109.43px;font-size:16.5px;line-height:16.5px;color:#111;transform:translateX(-50%);">пт</div>
<svg class="i" style="left:2023px;top:1164px;" width="26" height="26" viewBox="0 0 26 26"><path d="M6 2 L10 2 L12 8 L9.5 10.5 C11 14 13 16 16 17 L18.5 14.5 L24 16.5 L24 20.5 C24 22 22 24 20 24 C10 23 3 15 2 6 C2 4 4 2 6 2 Z" fill="none" stroke="#333" stroke-width="1.7" stroke-linejoin="round"/></svg>
<svg class="i" style="left:2022px;top:1236px;" width="29" height="24" viewBox="0 0 29 24"><path d="M14.5 2 C21.5 2 27 5.5 27 10.5 C27 15.5 21.5 19 14.5 19 C13 19 11.5 18.8 10 18.5 L5.5 22 L6.5 17.3 C3.5 15.8 2 13.5 2 10.5 C2 5.5 7.5 2 14.5 2 Z" fill="none" stroke="#333" stroke-width="1.7" stroke-linejoin="round"/></svg>
<div class="t " style="left:2036.40px;top:1305.98px;font-size:30.5px;line-height:30.5px;font-weight:700;color:#4a3ca8;transform:translateX(-50%);">?</div>
<svg class="i" style="left:20px;top:125px" width="40" height="40" viewBox="0 0 40 40"><g fill="none" stroke="#a6b6cd" stroke-width="1.5" stroke-linejoin="round" stroke-linecap="butt"><path d="M6.2 10.2 H15.7 M6.2 16.2 H15.7 M6.2 22.1 H15.7 M6.2 28.2 H15.7 M19.3 33 V7 H25 C30 7 32.6 10.8 32.6 14.6 C32.6 18.5 29.5 22.1 25 22.1 H19.3 M19.3 28.2 H27.3"/></g></svg>
<svg class="i" style="left:20px;top:185px" width="40" height="40" viewBox="0 0 40 40"><g fill="none" stroke="#a6b6cd" stroke-width="1.5" stroke-linejoin="round" stroke-linecap="butt"><path d="M23.4 19 C25 17.5 25.2 15 25.2 12.8 C25.2 8.5 22.5 5.6 19.3 5.6 C16 5.6 13 8.5 13 12.8 C13 16.5 14 19.5 16 20.8 V23.3 C11 24 7.2 26 7.2 29.2 C7.2 31.5 11 32.7 14.7 32.7"/><path d="M20.8 34.4 V23.7 H32.9 V32.6 H22.6 Z M23.4 26.7 H30 M23.4 29.7 H30"/></g></svg>
<svg class="i" style="left:20px;top:245px" width="40" height="40" viewBox="0 0 40 40"><g fill="none" stroke="#a6b6cd" stroke-width="1.5" stroke-linejoin="round" stroke-linecap="butt"><path d="M8.8 5.5 H10.5 C11 8 14 8 14.5 5.5 H17.5 C18 8 21 8 21.5 5.5 H24.5 C25 8 28 8 28.5 5.5 H31.2 V34.1 H29 C28.5 31.5 25.5 31.5 25 34.1 H21.8 C21.3 31.5 18.3 31.5 17.8 34.1 H14.8 C14.3 31.5 11.3 31.5 10.8 34.1 H8.8 Z"/><path d="M12.8 11.6 H27.3 M12.8 14.7 H27.3 M12.8 17.8 H27.3 M12.8 23.6 H18.4 M24.6 23.6 H27.3 M12.8 26.7 H18.4 M24.6 26.7 H27.3"/></g></svg>
<svg class="i" style="left:20px;top:305px" width="40" height="40" viewBox="0 0 40 40"><g fill="none" stroke="#a6b6cd" stroke-width="1.5" stroke-linejoin="round" stroke-linecap="butt"><path d="M8.3 31.2 H5.6 V20.8 H13 V8.9 H16.9 C18 8.9 18.8 9.8 19.3 11.5 L23.7 24.3 M28.2 5 V24.6 M14.9 31.2 H17.8 M28.7 31.2 H34.9"/><circle cx="11.6" cy="31.2" r="3.3"/><circle cx="25.4" cy="31.2" r="3.3"/></g></svg>
<svg class="i" style="left:20px;top:365px" width="40" height="40" viewBox="0 0 40 40"><g fill="none" stroke="#a6b6cd" stroke-width="1.5" stroke-linejoin="round" stroke-linecap="butt"><circle cx="15.4" cy="9.5" r="4"/><circle cx="24.5" cy="16.8" r="4"/><path d="M16.8 17.8 H11.3 C9 17.8 7.8 19 7.4 20.8 L5.9 26.9 H12.2"/><path d="M14.5 34.1 L17.5 27.5 C18.3 26 19.5 25.2 21 25.2 H28.5 C30 25.2 31.2 26 32 27.5 L34.6 34.1 Z"/></g></svg>
<svg class="i" style="left:20px;top:425px" width="40" height="40" viewBox="0 0 40 40"><g fill="none" stroke="#a6b6cd" stroke-width="1.5" stroke-linejoin="round" stroke-linecap="butt"><path d="M8 11.9 L25.8 5.6 L28.2 12.2"/><path d="M31 20.8 V16.2 H7.1 V28.6 C7.1 30.8 8.9 32.6 11.1 32.6 H27 C29.2 32.6 31 30.8 31 28.6 V25.5"/><rect x="26.7" y="20.8" width="6.2" height="4.7"/></g></svg>
<svg class="i" style="left:20px;top:485px" width="40" height="40" viewBox="0 0 40 40"><g fill="none" stroke="#a6b6cd" stroke-width="1.5" stroke-linejoin="round" stroke-linecap="butt"><path d="M5.9 11.9 H29.8 V24.2 C29.8 26.4 28 28.2 25.8 28.2 H9.9 C7.7 28.2 5.9 26.4 5.9 24.2 Z"/><path d="M14.5 28.2 L13.6 32.9 C12.5 33.5 10.5 33.8 9.8 34.1 H25.5 C24.8 33.8 22.8 33.5 21.7 32.9 L20.8 28.2"/><path d="M23.7 7.4 V5.9 H34.1 V34.1 H29.7"/></g></svg>
<svg class="i" style="left:20px;top:545px" width="40" height="40" viewBox="0 0 40 40"><g fill="none" stroke="#a6b6cd" stroke-width="1.5" stroke-linejoin="round" stroke-linecap="butt"><path d="M17.8 19 V19.5 C14 19.8 11.3 21.5 11.3 24.3 M24.6 19 V19.5 C28.4 19.8 31.2 21.5 31.2 24.3 M17.8 19 C16.8 18 16.3 15 16.3 11.9 C16.3 8.5 18.5 6.2 21.4 6.2 C24.3 6.2 26.7 8.5 26.7 11.9 C26.7 15 26 18 24.6 19"/><path d="M19.3 29.7 H14.2 V27.8 C14.2 27 14.8 26.7 15.5 26.7 H21.4 C22 25.5 22.7 25.2 23.4 25.2 C24.5 25.2 25.3 25.7 25.8 26.4 H32.9 V34.1 H13 L6.8 28.8 C6 28 6.3 27 7.5 27.2 L14.2 29.7 M26.1 26.4 V34.1"/></g></svg>
<svg class="i" style="left:20px;top:605px" width="40" height="40" viewBox="0 0 40 40"><g fill="none" stroke="#a6b6cd" stroke-width="1.5" stroke-linejoin="round" stroke-linecap="butt"><path d="M13.6 20.2 L6.5 16 L34.4 5.3 L23.7 33.5 L19.3 25.5 C18.8 24.5 18.8 22.5 19.5 21.7 L27.6 12.2"/></g></svg>
<svg class="i" style="left:20px;top:665px" width="40" height="40" viewBox="0 0 40 40"><g fill="none" stroke="#f4f6f8" stroke-width="1.8" stroke-linejoin="round" stroke-linecap="butt"><path d="M7.3 7.3 H32.6 V28.5 C32.6 30.7 30.8 32.5 28.6 32.5 H11.3 C9.1 32.5 7.3 30.7 7.3 28.5 Z"/><path d="M11 13.1 H18.2 M14.7 9.3 V16.9 M21.4 13.1 H28.9 M11 22.1 H18.5 M11 25.2 H18.5 M22.4 20.9 L28 26.5 M28 20.9 L22.4 26.5"/></g></svg>
<svg class="i" style="left:0px;top:0px" width="80" height="1000" viewBox="0 0 80 1000"><path d="M34.50 795.10 L36.00 795.10 L39.90 801.00 L43.70 795.10 L45.50 795.10 M36.60 802.50 L30.70 796.90 C27.40 801.00 29.90 808.40 37.80 808.40 L35.10 816.20 L39.90 819.10 L44.90 816.20 L42.00 808.40 C49.90 808.40 52.40 801.00 49.40 796.90 L43.20 802.50 M26.20 807.80 L32.20 813.50" fill="none" stroke="#a6b6cd" stroke-width="1.5" stroke-linejoin="miter"/><circle cx="50.60" cy="812.30" r="2.60" fill="none" stroke="#a6b6cd" stroke-width="1.5"/><rect x="38.60" y="790.00" width="2.60" height="2.40" fill="#a6b6cd"/></svg>
<svg class="i" style="left:20px;top:845px" width="40" height="40" viewBox="0 0 40 40"><g fill="none" stroke="#a6b6cd" stroke-width="1.5" stroke-linejoin="round" stroke-linecap="butt"><path d="M8.6 30.3 V5.9 H25.5"/><path d="M29.7 22.6 V10.4 H13.2 V34.1 H23.7 L30.3 26.4"/><path d="M23.7 34.1 C22.5 32 23 29.8 24.5 28.6 C26 27.4 28 26.8 30.3 26.4 C29.5 28.5 28 30.3 26.5 31.5"/><path d="M16 21.4 L19.4 26.7 L26.1 15.4"/></g></svg>
<svg class="i" style="left:20px;top:905px" width="40" height="40" viewBox="0 0 40 40"><g fill="none" stroke="#a6b6cd" stroke-width="1.5" stroke-linejoin="round" stroke-linecap="butt"><path d="M28.5 12.2 C26.5 9 22 7.4 17.2 7.4 C10.5 7.4 5.6 11 5.6 15.7 C5.6 18 6.7 20 8.6 21.4 L6.5 29.4 L12.2 25.8"/><path d="M31.9 27.3 C33.6 26 34.7 24.4 34.7 22.6 C34.7 18.6 30.4 15.5 25.2 15.5 C20 15.5 15.7 18.6 15.7 22.6 C15.7 26.6 20 29.7 25.2 29.7 C25.8 29.7 26.4 29.6 27 29.4 L33.8 32.6 Z"/></g></svg>
<svg class="i" style="left:20.5px;top:965px" width="39" height="40" viewBox="0 0 39 40"><defs><clipPath id="av"><path d="M19.5 0.5 C33 0.5 38.7 6 38.7 20 C38.7 34 33 39.5 19.5 39.5 C6 39.5 0.3 34 0.3 20 C0.3 6 6 0.5 19.5 0.5 Z"/></clipPath></defs><g clip-path="url(#av)"><rect width="39" height="40" fill="#fbfbfb"/><path d="M0 40 C0.5 30 3 25.5 10 23.5 L19.5 21 L29 23.5 C36 25.5 38.5 30 39 40 Z" fill="#1b1d22"/><path d="M16.5 21.5 L19.5 37 L22.5 21.5 Z" fill="#ececee"/><path d="M18.5 23 L19.5 35 L20.5 23 Z" fill="#a0a6b0"/><ellipse cx="19.5" cy="13" rx="4.8" ry="6.2" fill="#cfae98"/><path d="M14.6 11 C14.3 6 16.8 4.6 19.5 4.6 C22.2 4.6 24.7 6 24.4 11 C23.6 8.6 21.8 8 19.5 8 C17.2 8 15.4 8.6 14.6 11 Z" fill="#55504d"/></g></svg>
<svg class="i" style="left:0;top:1000px" width="80" height="80" viewBox="0 1000 80 80"><path d="M50.25 1044.80 L50.24 1045.16 L50.22 1045.53 L50.19 1045.89 L50.15 1046.25 L50.39 1046.66 L50.97 1047.16 L51.58 1047.72 L52.17 1048.33 L52.71 1048.98 L53.19 1049.65 L53.29 1050.23 L53.10 1050.70 L52.88 1051.16 L52.65 1051.61 L52.41 1052.05 L52.15 1052.48 L51.87 1052.91 L51.58 1053.32 L51.28 1053.73 L50.72 1053.92 L49.90 1053.85 L49.07 1053.70 L48.25 1053.49 L47.46 1053.25 L46.73 1053.00 L46.25 1053.00 L45.96 1053.21 L45.67 1053.42 L45.36 1053.62 L45.05 1053.81 L44.73 1053.98 L44.41 1054.15 L44.08 1054.30 L43.75 1054.44 L43.51 1054.86 L43.36 1055.62 L43.18 1056.42 L42.95 1057.23 L42.66 1058.03 L42.31 1058.78 L41.87 1059.16 L41.37 1059.22 L40.86 1059.26 L40.36 1059.29 L39.85 1059.30 L39.34 1059.29 L38.84 1059.26 L38.33 1059.22 L37.83 1059.16 L37.39 1058.78 L37.04 1058.03 L36.75 1057.23 L36.52 1056.42 L36.34 1055.62 L36.19 1054.86 L35.95 1054.44 L35.62 1054.30 L35.29 1054.15 L34.97 1053.98 L34.65 1053.81 L34.34 1053.62 L34.03 1053.42 L33.74 1053.21 L33.45 1053.00 L32.97 1053.00 L32.24 1053.25 L31.45 1053.49 L30.63 1053.70 L29.80 1053.85 L28.98 1053.92 L28.42 1053.73 L28.12 1053.32 L27.83 1052.91 L27.55 1052.48 L27.29 1052.05 L27.05 1051.61 L26.82 1051.16 L26.60 1050.70 L26.41 1050.23 L26.51 1049.65 L26.99 1048.98 L27.53 1048.33 L28.12 1047.72 L28.73 1047.16 L29.31 1046.66 L29.55 1046.25 L29.51 1045.89 L29.48 1045.53 L29.46 1045.16 L29.45 1044.80 L29.46 1044.44 L29.48 1044.07 L29.51 1043.71 L29.55 1043.35 L29.31 1042.94 L28.73 1042.44 L28.12 1041.88 L27.53 1041.27 L26.99 1040.62 L26.51 1039.95 L26.41 1039.37 L26.60 1038.90 L26.82 1038.44 L27.05 1037.99 L27.29 1037.55 L27.55 1037.12 L27.83 1036.69 L28.12 1036.28 L28.42 1035.87 L28.98 1035.68 L29.80 1035.75 L30.63 1035.90 L31.45 1036.11 L32.24 1036.35 L32.97 1036.60 L33.45 1036.60 L33.74 1036.39 L34.03 1036.18 L34.34 1035.98 L34.65 1035.79 L34.97 1035.62 L35.29 1035.45 L35.62 1035.30 L35.95 1035.16 L36.19 1034.74 L36.34 1033.98 L36.52 1033.18 L36.75 1032.37 L37.04 1031.57 L37.39 1030.82 L37.83 1030.44 L38.33 1030.38 L38.84 1030.34 L39.34 1030.31 L39.85 1030.30 L40.36 1030.31 L40.86 1030.34 L41.37 1030.38 L41.87 1030.44 L42.31 1030.82 L42.66 1031.57 L42.95 1032.37 L43.18 1033.18 L43.36 1033.98 L43.51 1034.74 L43.75 1035.16 L44.08 1035.30 L44.41 1035.45 L44.73 1035.62 L45.05 1035.79 L45.36 1035.98 L45.67 1036.18 L45.96 1036.39 L46.25 1036.60 L46.73 1036.60 L47.46 1036.35 L48.25 1036.11 L49.07 1035.90 L49.90 1035.75 L50.72 1035.68 L51.28 1035.87 L51.58 1036.28 L51.87 1036.69 L52.15 1037.12 L52.41 1037.55 L52.65 1037.99 L52.88 1038.44 L53.10 1038.90 L53.29 1039.37 L53.19 1039.95 L52.71 1040.62 L52.17 1041.27 L51.58 1041.88 L50.97 1042.44 L50.39 1042.94 L50.15 1043.35 L50.19 1043.71 L50.22 1044.07 L50.24 1044.44 L50.25 1044.80Z" fill="none" stroke="#a6b6cd" stroke-width="1.5"/><circle cx="39.85" cy="1044.8" r="4" fill="none" stroke="#a6b6cd" stroke-width="1.5"/><circle cx="50.9" cy="1036" r="2.4" fill="#2e3c4e"/><circle cx="28.8" cy="1053.6" r="2.4" fill="#2e3c4e"/></svg>
</body></html>
